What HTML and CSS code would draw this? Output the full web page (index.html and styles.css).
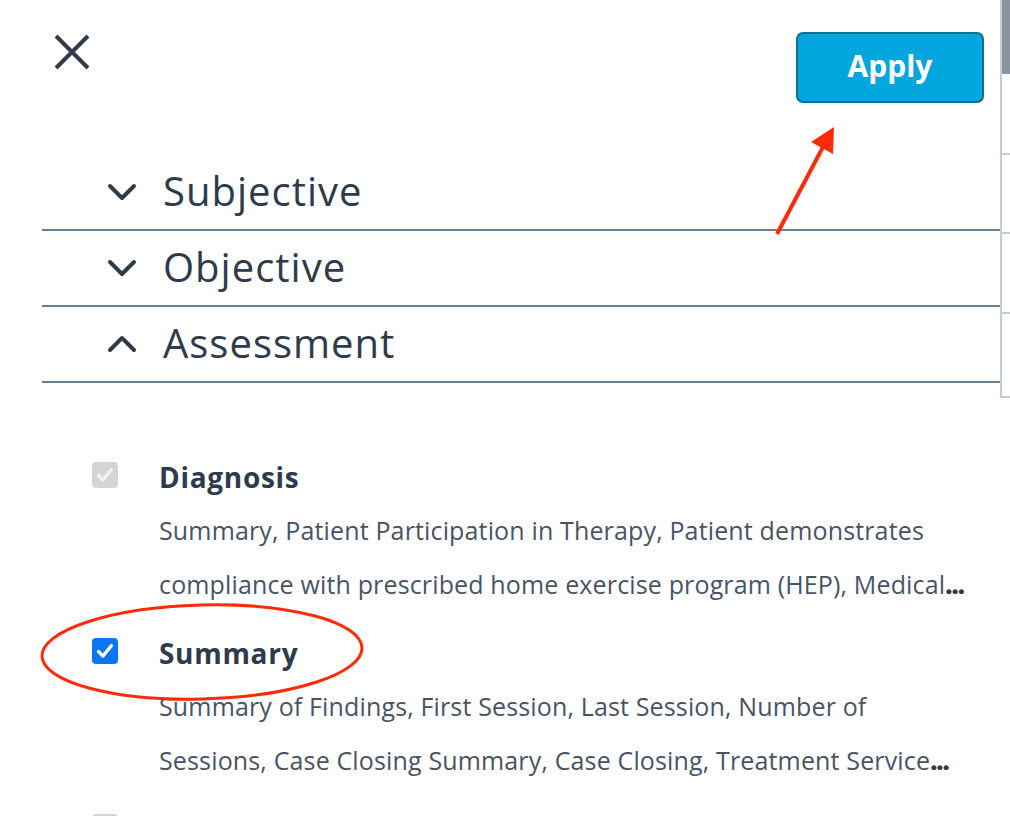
FILE: index.html
```html
<!DOCTYPE html>
<html lang="en">
<head>
<meta charset="utf-8">
<title>Filter sections</title>
<link rel="stylesheet" href="styles.css">
</head>
<body>
<div class="page">
  <div class="main">
    <header class="header">
      <button class="close" aria-label="Close">
        <svg width="36" height="36" viewBox="0 0 36 36"><path d="M2 2 L34 34 M34 2 L2 34" stroke="#2f3a4b" stroke-width="4" fill="none"/></svg>
      </button>
      <button class="apply">Apply</button>
    </header>

    <div class="acc-row">
      <svg class="chev" width="30" height="18" viewBox="0 0 30 18"><path d="M3 3 L15 15 L27 3" stroke="#2f3a4b" stroke-width="4" fill="none" stroke-linecap="round" stroke-linejoin="round"/></svg>
      <span class="acc-title">Subjective</span>
    </div>
    <div class="acc-row">
      <svg class="chev" width="30" height="18" viewBox="0 0 30 18"><path d="M3 3 L15 15 L27 3" stroke="#2f3a4b" stroke-width="4" fill="none" stroke-linecap="round" stroke-linejoin="round"/></svg>
      <span class="acc-title">Objective</span>
    </div>
    <div class="acc-row">
      <svg class="chev" width="30" height="18" viewBox="0 0 30 18"><path d="M3 15 L15 3 L27 15" stroke="#2f3a4b" stroke-width="4" fill="none" stroke-linecap="round" stroke-linejoin="round"/></svg>
      <span class="acc-title">Assessment</span>
    </div>

    <div class="items">
      <div class="item">
        <svg class="cb" width="26" height="26" viewBox="0 0 26 26"><rect x="0" y="0" width="26" height="26" rx="4" fill="#d5d5d5"/><path d="M6.5 13.5 L11 18 L19.5 7.5" stroke="#f2f2f2" stroke-width="3.4" fill="none" stroke-linecap="round" stroke-linejoin="round"/></svg>
        <div class="item-body">
          <div class="item-title">Diagnosis</div>
          <div class="desc">Summary, Patient Participation in Therapy, Patient demonstrates</div>
          <div class="desc">compliance with prescribed home exercise program (HEP), Medical<span class="more">...</span></div>
        </div>
      </div>
      <div class="item">
        <svg class="cb" width="26" height="26" viewBox="0 0 26 26"><rect x="0" y="0" width="26" height="26" rx="4" fill="#0b76f4"/><path d="M6.5 13.5 L11 18 L19.5 7.5" stroke="#ffffff" stroke-width="3.4" fill="none" stroke-linecap="round" stroke-linejoin="round"/></svg>
        <div class="item-body">
          <div class="item-title">Summary</div>
          <div class="desc">Summary of Findings, First Session, Last Session, Number of</div>
          <div class="desc">Sessions, Case Closing Summary, Case Closing, Treatment Service<span class="more">...</span></div>
        </div>
      </div>
      <div class="item">
        <svg class="cb" width="26" height="26" viewBox="0 0 26 26"><rect x="0" y="0" width="26" height="26" rx="4" fill="#d5d5d5"/><path d="M6.5 13.5 L11 18 L19.5 7.5" stroke="#f2f2f2" stroke-width="3.4" fill="none" stroke-linecap="round" stroke-linejoin="round"/></svg>
      </div>
    </div>
  </div>

  <div class="gutter">
    <div class="thumb"></div>
    <div class="seg seg1"></div>
    <div class="seg seg2"></div>
    <div class="seg seg3"></div>
    <div class="seg seg4"></div>
  </div>

  <svg class="annot" width="1010" height="816" viewBox="0 0 1010 816">
    <line x1="777" y1="234" x2="823" y2="147" stroke="#ff2a0a" stroke-width="4"/>
    <polygon points="834,127 811,142 833,154" fill="#ff2a0a"/>
    <ellipse cx="202" cy="652" rx="160" ry="47" stroke="#ff2a0a" stroke-width="3" fill="none" transform="rotate(-1.5 202 652)"/>
  </svg>
</div>
</body>
</html>
```
FILE: styles.css
```css
html, body {
  margin: 0;
  padding: 0;
  background: #ffffff;
}
body {
  width: 1010px;
  height: 816px;
  overflow: hidden;
  font-family: "Open Sans", "Liberation Sans", sans-serif;
  color: #313d4f;
}
.page {
  display: flex;
  position: relative;
  width: 1010px;
  height: 816px;
}
.main {
  flex: 0 0 1000px;
  box-sizing: border-box;
  padding-left: 42px;
}
.header {
  display: flex;
  justify-content: space-between;
  align-items: flex-start;
  height: 155px;
  box-sizing: border-box;
  padding-top: 32px;
  padding-right: 16px;
}
.close {
  border: 0;
  background: none;
  padding: 0;
  margin: 2px 0 0 12px;
  width: 36px;
  height: 36px;
  display: flex;
}
.apply {
  width: 188px;
  height: 71px;
  box-sizing: border-box;
  background: #00a6dd;
  border: 2px solid #0b6f93;
  border-radius: 7px;
  color: #ffffff;
  font-family: "Open Sans", "Liberation Sans", sans-serif;
  font-weight: 700;
  font-size: 30px;
  padding: 0 0 4px 0;
}
.acc-row {
  display: flex;
  align-items: center;
  height: 74px;
  border-bottom: 2px solid #6b7d92;
  padding-left: 65px;
}
.chev {
  flex: 0 0 30px;
}
.acc-title {
  margin-left: 26px;
  font-size: 40px;
  letter-spacing: 1px;
  color: #2f3a4b;
  padding-bottom: 4px;
}
.items {
  padding-top: 68px;
}
.item {
  display: flex;
  align-items: flex-start;
  margin-bottom: 16px;
}
.cb {
  flex: 0 0 26px;
  margin-left: 50px;
  margin-top: 11px;
}
.item-body {
  margin-left: 41px;
  width: 830px;
}
.item-title {
  height: 52px;
  line-height: 52px;
  font-size: 28px;
  font-weight: 700;
  letter-spacing: 0.7px;
  color: #2f3a4b;
}
.desc {
  height: 54px;
  line-height: 54px;
  font-size: 25px;
  letter-spacing: 0.15px;
  color: #485466;
  white-space: nowrap;
}
.more {
  font-weight: 800;
  letter-spacing: -1px;
  color: #2f3a4b;
}
.gutter {
  flex: 0 0 10px;
  height: 398px;
  box-sizing: border-box;
  border-left: 2px solid #c4ccd6;
  border-bottom: 2px solid #c4ccd6;
  display: flex;
  flex-direction: column;
}
.thumb {
  height: 74px;
  background: #8a93a0;
}
.seg {
  border-top: 2px solid #c4ccd6;
}
.seg1 { height: 79px; border-top: 0; }
.seg2 { height: 77px; }
.seg3 { height: 78px; }
.seg4 { height: 81px; }
.annot {
  position: absolute;
  left: 0;
  top: 0;
  pointer-events: none;
}
```
